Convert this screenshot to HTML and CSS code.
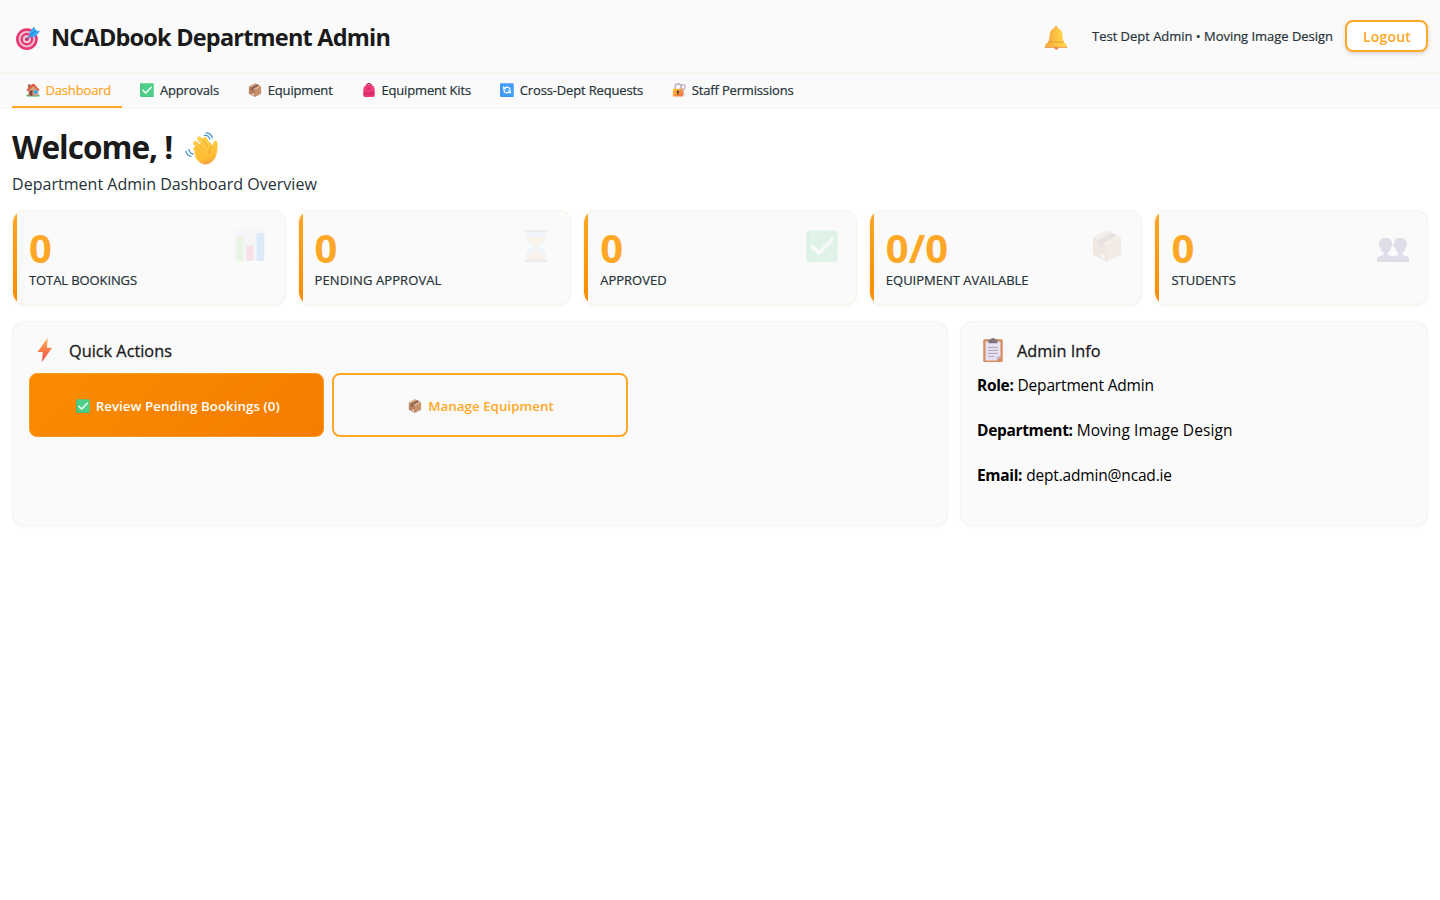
FILE: index.html
```html
<!DOCTYPE html>
<html lang="en">
<head>
<meta charset="utf-8">
<title>NCADbook Department Admin</title>
<link rel="stylesheet" href="styles.css">
</head>
<body>
<svg class="sprite" aria-hidden="true">
  <defs>
    <linearGradient id="g-bell" x1="0" y1="0" x2="1" y2="0"><stop offset="0" stop-color="#f6a63c"/><stop offset=".6" stop-color="#ffc844"/><stop offset="1" stop-color="#ffd84f"/></linearGradient>
    <linearGradient id="g-bolt" x1="0" y1="0" x2="0" y2="1"><stop offset="0" stop-color="#ffb24a"/><stop offset="1" stop-color="#f0474e"/></linearGradient>
    <linearGradient id="g-hand" gradientUnits="userSpaceOnUse" x1="14" y1="5" x2="22" y2="32"><stop offset="0" stop-color="#ffd04a"/><stop offset=".75" stop-color="#ffbd32"/><stop offset="1" stop-color="#f59a45"/></linearGradient>
    <linearGradient id="g-lock" x1="0" y1="0" x2="1" y2="1"><stop offset="0" stop-color="#ffc83f"/><stop offset="1" stop-color="#ef6c3b"/></linearGradient>
  </defs>
  <symbol id="target" viewBox="0 0 32 32">
    <circle cx="14.500" cy="17.500" r="14.500" fill="#e83a6f"/><circle cx="14.500" cy="17.500" r="11" fill="#e9c3d8"/><circle cx="14.500" cy="17.500" r="8.400" fill="#e83a6f"/><circle cx="14.500" cy="17.500" r="5.200" fill="#ecd0e2"/><circle cx="14.500" cy="17.500" r="2.600" fill="#cf3164"/>
    <path d="M14.500 17.500 24 9" stroke="#7a70a8" stroke-width="2.200"/>
    <path d="M18 14V8l6-7.500 2.500 5 5.500 1.500-7 8z" fill="#3fa9f5"/><path d="M26 6l-8 8" stroke="#1f78cf" stroke-width="1.400"/>
  </symbol>
  <symbol id="house" viewBox="0 0 32 32">
    <rect x="1" y="26" width="30" height="5" rx="2.500" fill="#38b764"/><path d="M5 15 17 5l11 10v14H5z" fill="#d4a184"/><path d="M5 3h5v9H5z" fill="#a04f45"/><path d="M1 16 14 2h5l12 14-3 2L17 7 4 19z" fill="#e0593f"/><rect x="8" y="17" width="7" height="12" fill="#87463d"/><rect x="18" y="17" width="8" height="7" fill="#2ba5f0"/>
  </symbol>
  <symbol id="check" viewBox="0 0 32 32">
    <rect x=".5" y=".5" width="31" height="31" rx="2.500" fill="#4fd089"/><path d="M2 1v29.500H31" fill="none" stroke="#3bb676" stroke-width="2"/><path d="M6.500 16.500 13 23 26 9.500" fill="none" stroke="#fff" stroke-width="3.200" stroke-linecap="round" stroke-linejoin="round"/>
  </symbol>
  <symbol id="box" viewBox="0 0 32 32">
    <path d="M16 0 30 7.500 16 15 2 7.500z" fill="#d9ad85"/><path d="M2 7.500 16 15v17L2 24.500z" fill="#ba8160"/><path d="M30 7.500 16 15v17l14-7.500z" fill="#c7936d"/><path d="M21 2.800 26 5.300 12 13v5l-5-2.800v-5z" fill="#8a6253"/><path d="m10 23 4 2v4l-4-2z" fill="#f1e6e3"/>
  </symbol>
  <symbol id="bag" viewBox="0 0 32 32">
    <path d="M11 7V4q5-5 10 0v3" fill="none" stroke="#b51f5c" stroke-width="2.600"/><path d="M3 29V16Q4 5 13 4h6q9 1 10 12v13q-1 3-4 3H7q-3 0-4-3z" fill="#f03a78"/><path d="M4 20q12 5 24 0v8H4z" fill="#dc2b6c"/><path d="M12 12h8M23 18v6" stroke="#b51f5c" stroke-width="2"/>
  </symbol>
  <symbol id="cycle" viewBox="0 0 32 32">
    <rect x=".5" y=".5" width="31" height="31" rx="2.500" fill="#45a0f8"/><path d="M2 1v29.500H31" fill="none" stroke="#2f86e2" stroke-width="2"/><path d="M11 11.500q5-3.500 9.500-.5 2.500 2 2.500 5M21 20.500q-5 3.500-9.500.5Q9 19 9 16" fill="none" stroke="#fff" stroke-width="2.800"/><path d="M7 7v8h8zM25 25v-8h-8z" fill="#fff"/>
  </symbol>
  <symbol id="lock" viewBox="0 0 32 32">
    <circle cx="25" cy="9" r="5" fill="none" stroke="#c9bccb" stroke-width="3"/><path d="M26 13v14h4" fill="none" stroke="#c9bccb" stroke-width="3"/><path d="M7 14V8q1-6 7-6t7 6v6" fill="none" stroke="#c0b3c4" stroke-width="3.500"/><rect x="2" y="13" width="23" height="18" rx="2" fill="url(#g-lock)"/><circle cx="13.500" cy="20" r="2.800" fill="#593a40"/><path d="M13.500 20v7" stroke="#593a40" stroke-width="2.600"/>
  </symbol>
  <symbol id="bell" viewBox="0 0 32 32">
    <path d="M13 28h7q-1 3.500-3.500 3.500T13 28z" fill="#e8825c"/><circle cx="16" cy="3" r="2.600" fill="#f2ae3a"/><path d="M16 2.500q8 .5 8.500 9 .5 9 4 13H3.500q3.500-4 4-13 .5-8.500 8.500-9z" fill="url(#g-bell)"/><path d="M3 23h26l2 5.500H1z" fill="url(#g-bell)"/><path d="M6 21.500h20.500" stroke="#e79c34" stroke-width="1.200"/><path d="M1 28.500h30" stroke="#e9903f" stroke-width="1"/>
  </symbol>
  <symbol id="wave" viewBox="0 0 32 32">
    <g fill="none" stroke="#2a86cf" stroke-width="1.100" stroke-linecap="round"><path d="M18.500 3.200q4-.4 5.500 3.500M20.500.8q5 .2 6 5M3.800 17q.6 3.600 4 4.500M.8 18.500q.8 4.500 5.200 5"/></g>
    <path d="M10 16.200 15 22M9.800 10.500l7 9M13.800 6.300l7.500 9.700M19.200 6.800l5 8" fill="none" stroke="url(#g-hand)" stroke-width="4" stroke-linecap="round"/>
    <path d="M12 13.500 21 8q3.500 2 6 5.500.2-4.500 2.500-5 2.600.3 2 5.500-.2 9-3.500 13-4 5-9.500 4.500-4-.8-8-6l-1.500-6z" fill="url(#g-hand)"/>
    <path d="m12 9.500 5.500 7.500M16.800 6.500l5 7.500M10.500 14l5 6" fill="none" stroke="#e9a02d" stroke-width=".7" stroke-linecap="round"/>
    <path d="M27.300 13.500q-5 2.500-3.800 7.500" fill="none" stroke="#ed9e31" stroke-width=".9"/>
  </symbol>
  <symbol id="chart" viewBox="0 0 32 32">
    <rect x=".5" y=".5" width="31" height="31" rx="2" fill="#e6dfef"/><path d="M11 1v30M21 1v30M1 11h30M1 21h30" stroke="#cfc3dc" stroke-width=".8"/><rect x="3" y="7" width="6" height="25" fill="#84d66c"/><rect x="12.500" y="16.500" width="7" height="15.500" fill="#ee4a83"/><rect x="22.500" y="4" width="7.500" height="28" fill="#3c9df0"/>
  </symbol>
  <symbol id="hourglass" viewBox="0 0 32 32">
    <path d="M6 2h20q1 11-8 14 9 3 8 14H6q-1-11 8-14Q5 13 6 2z" fill="#b9dcf5"/><path d="M8 7h16q-.5 5.500-7 8.500v7q5 .5 7 6.500H8q2-6 7-6.500v-7Q8.500 12.500 8 7z" fill="#f8c88b"/><rect x="4.500" y="0" width="23" height="2.600" rx="1" fill="#a99aa8"/><rect x="4.500" y="29.400" width="23" height="2.600" rx="1" fill="#a99aa8"/>
  </symbol>
  <symbol id="people" viewBox="0 0 32 32">
    <path id="person" d="M0 32v-3q0-2 2.500-3l4-1v-2.500Q4 21 3.500 17.500 1.500 17 1.700 14.500L2.500 13.500Q2 8 8.700 8t6.200 5.500l.8 1q.2 2.500-1.800 3-.5 3.500-3 5V25l4 1q2.500 1 2.500 3v3z" fill="#51408b"/>
    <use href="#person" x="14.600"/>
  </symbol>
  <symbol id="bolt" viewBox="0 0 32 32">
    <path d="M19.500 0 6 18.500h7L12 32 25.500 13h-7z" fill="url(#g-bolt)"/>
  </symbol>
  <symbol id="clipboard" viewBox="0 0 32 32">
    <rect x="3" y="1.500" width="26" height="30.500" rx="1.800" fill="#d88d61"/><path d="M6 4.500h20V25l-5 5H6z" fill="#e8e1f2"/><path d="M26 24.500h-5V30z" fill="#c0aed0"/><path d="M10 5V2h3q0-2 3-2t3 2h3v5H10z" fill="#81747f"/><path d="M9.500 12.500h13M9.500 16.500h13M9.500 20.500h13M9.500 24.500h8" stroke="#aaa0b0" stroke-width="1.300"/>
  </symbol>
</svg>

<header class="topbar">
  <h1 class="brand"><svg class="brand-icon"><use href="#target"/></svg><span>NCADbook Department Admin</span></h1>
  <div class="account">
    <svg class="bell-icon"><use href="#bell"/></svg>
    <span class="user">Test Dept Admin • Moving Image Design</span>
    <button class="logout">Logout</button>
  </div>
</header>
<nav class="nav">
  <a class="nav-item active"><svg class="ic14"><use href="#house"/></svg><span>Dashboard</span></a>
  <a class="nav-item"><svg class="ic14"><use href="#check"/></svg><span>Approvals</span></a>
  <a class="nav-item"><svg class="ic14"><use href="#box"/></svg><span>Equipment</span></a>
  <a class="nav-item"><svg class="ic14"><use href="#bag"/></svg><span>Equipment Kits</span></a>
  <a class="nav-item"><svg class="ic14"><use href="#cycle"/></svg><span>Cross-Dept Requests</span></a>
  <a class="nav-item"><svg class="ic14"><use href="#lock"/></svg><span>Staff Permissions</span></a>
</nav>
<main class="main">
  <h2 class="welcome"><span>Welcome, !</span><svg class="wave-icon"><use href="#wave"/></svg></h2>
  <p class="subtitle">Department Admin Dashboard Overview</p>
  <section class="stats">
    <article class="stat"><div><div class="value">0</div><div class="label tight">TOTAL BOOKINGS</div></div><svg class="stat-icon chart"><use href="#chart"/></svg></article>
    <article class="stat"><div><div class="value">0</div><div class="label wide">PENDING APPROVAL</div></div><svg class="stat-icon"><use href="#hourglass"/></svg></article>
    <article class="stat"><div><div class="value">0</div><div class="label">APPROVED</div></div><svg class="stat-icon"><use href="#check"/></svg></article>
    <article class="stat"><div><div class="value">0/0</div><div class="label">EQUIPMENT AVAILABLE</div></div><svg class="stat-icon"><use href="#box"/></svg></article>
    <article class="stat"><div><div class="value">0</div><div class="label">STUDENTS</div></div><svg class="stat-icon"><use href="#people"/></svg></article>
  </section>
  <section class="panels">
    <article class="panel">
      <h3 class="panel-title"><svg class="panel-icon"><use href="#bolt"/></svg><span>Quick Actions</span></h3>
      <div class="actions">
        <button class="action primary"><svg class="ic14"><use href="#check"/></svg><span>Review Pending Bookings (0)</span></button>
        <button class="action"><svg class="ic14"><use href="#box"/></svg><span>Manage Equipment</span></button>
      </div>
    </article>
    <article class="panel">
      <h3 class="panel-title"><svg class="panel-icon"><use href="#clipboard"/></svg><span>Admin Info</span></h3>
      <p class="info"><b>Role:</b><span>Department Admin</span></p>
      <p class="info"><b>Department:</b><span class="loose">Moving Image Design</span></p>
      <p class="info"><b>Email:</b><span>dept.admin@ncad.ie</span></p>
    </article>
  </section>
</main>
</body>
</html>
```
FILE: styles.css
```css
* { box-sizing: border-box; }
body { margin: 0; background: #fff; color: #000; font-family: "Open Sans", "Noto Sans", sans-serif; font-size: 16px; }
h1, h2, h3, p { margin: 0; }
span, b { white-space: nowrap; }
.sprite { position: absolute; width: 0; height: 0; }

.topbar { display: flex; justify-content: space-between; align-items: center; height: 74px; padding: 0 12px 0 16px; background: #fafafa; border-bottom: 2px solid #f9f3ee; }
.brand { display: flex; align-items: center; gap: 11px; padding-top: 3px; font-size: 23.5px; line-height: 32px; font-weight: 700; color: #1a1a1a; letter-spacing: -0.8px; }
.brand span { margin-top: -2px; }
.brand-icon { width: 24px; height: 24px; }
.account { display: flex; align-items: center; }
.bell-icon { width: 24px; height: 24px; margin: 3px 24px 0 0; }
.user { font-size: 13px; color: #263238; -webkit-text-stroke: .2px #263238; letter-spacing: -.03px; margin-right: 12px; }
.logout { width: 83px; height: 32px; padding: 0 0 0 1px; border: 2px solid #ffa726; border-radius: 8px; background: #fff; color: #ffa726; font: 600 14px "Open Sans", sans-serif; letter-spacing: .2px; box-shadow: 0 2px 4px rgba(0, 0, 0, .14); }

.nav { display: flex; gap: 4px; height: 35px; padding: 0 12px; background: #fafafa; border-bottom: 1px solid #fcf5ee; }
.nav-item { display: flex; align-items: center; gap: 5.5px; height: 34px; padding: 0 11.3px 0 14px; font-size: 13px; letter-spacing: -.16px; color: #263238; -webkit-text-stroke: .2px; border-bottom: 2px solid transparent; }
.nav-item.active { color: #ffa726; border-bottom-color: #ffa726; }
.ic14 { width: 14px; height: 14px; flex: none; -webkit-text-stroke: 0; }

.main { padding: 21px 12px; }
.welcome { display: flex; align-items: center; gap: 13px; height: 36px; font-size: 31.5px; line-height: 34px; font-weight: 700; color: #1a1a1a; letter-spacing: -0.98px; }
.welcome span { margin-top: -2px; }
.wave-icon { width: 33px; height: 33px; }
.subtitle { height: 24px; margin: 6px 0 14px; line-height: 24px; font-size: 16px; letter-spacing: .03px; color: #263238; }

.stats { display: grid; grid-template-columns: repeat(5, 1fr); gap: 12px; }
.stat { display: flex; justify-content: space-between; height: 95px; padding: 17px 18px 0 16px; border: 1px solid #fcf3e6; border-radius: 12px; background: linear-gradient(#ffa726, #fb8c00) left / 4px 100% no-repeat padding-box, #fafafa; box-shadow: 0 1px 3px rgba(0, 0, 0, .05); }
.value { height: 40px; line-height: 40px; font-size: 40px; font-weight: 700; color: #ffa726; }
.label { margin-top: 3px; line-height: 18px; font-size: 13px; color: #263238; -webkit-text-stroke: .2px #263238; }
.label.tight { letter-spacing: -.1px; }
.label.wide { letter-spacing: .1px; }
.stat-icon { width: 32px; height: 32px; margin-top: 2px; opacity: .15; }
.stat-icon.chart { margin: 1px 1px 0 0; }

.panels { display: grid; grid-template-columns: 2fr 1fr; gap: 12px; margin-top: 16px; }
.panel { height: 205px; padding: 15px 16px; border: 1px solid #fcf3ea; border-radius: 12px; background: #fafafa; box-shadow: 0 1px 3px rgba(0, 0, 0, .04); }
.panel-title { display: flex; align-items: center; gap: 12px; height: 26px; padding-left: 4px; font-size: 16.3px; font-weight: 400; color: #1a1a1a; -webkit-text-stroke: .3px #1a1a1a; }
.panel-title span { padding-top: 2px; }
.panel-icon { width: 24px; height: 24px; }
.actions { display: grid; grid-template-columns: repeat(3, 1fr); gap: 8px; margin-top: 10px; }
.action { display: flex; align-items: center; justify-content: center; gap: 6px; height: 64px; padding: 2px 0 0 2px; border: 2px solid #ffa726; border-radius: 8px; background: #fafafa; color: #ffa726; font: 600 13.33px "Open Sans", sans-serif; letter-spacing: .04px; }
.action.primary { border: 1px solid #fb9a1c; background: linear-gradient(135deg, #fb8c00, #f57c00); color: #fff; }
.info { display: flex; gap: 4px; height: 24px; line-height: 24px; margin-bottom: 21px; font-size: 15.5px; letter-spacing: -.17px; }
.info b { letter-spacing: -.33px; }
.info .loose { letter-spacing: .07px; }
.panel-title + .info { margin-top: 10px; }
```
